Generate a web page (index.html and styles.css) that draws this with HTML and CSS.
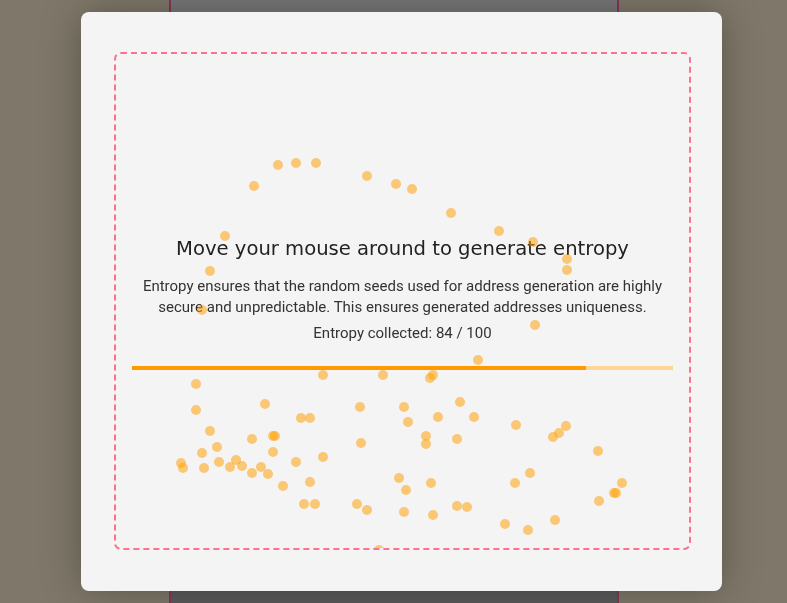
FILE: index.html
```html
<!DOCTYPE html>
<html>
<head>
<meta charset="utf-8">
<link rel="stylesheet" href="styles.css">
</head>
<body>
<div class="page"><div class="column"></div></div>
<div class="overlay">
  <div class="modal">
    <div class="dropzone">
      <div class="content">
        <h2 class="title">Move your mouse around to generate entropy</h2>
        <p class="desc">Entropy ensures that the random seeds used for address generation are highly secure and unpredictable. This ensures generated addresses uniqueness.</p>
        <p class="count">Entropy collected: 84 / 100</p>
        <div class="bar"><div class="fill" style="width:84%"></div></div>
      </div>
      <div class="dots">
        <span class="dot" style="left:139px;top:132px"></span>
        <span class="dot" style="left:163px;top:111px"></span>
        <span class="dot" style="left:181px;top:109px"></span>
        <span class="dot" style="left:201px;top:109px"></span>
        <span class="dot" style="left:252px;top:122px"></span>
        <span class="dot" style="left:281px;top:130px"></span>
        <span class="dot" style="left:297px;top:135px"></span>
        <span class="dot" style="left:336px;top:159px"></span>
        <span class="dot" style="left:110px;top:182px"></span>
        <span class="dot" style="left:95px;top:217px"></span>
        <span class="dot" style="left:87px;top:256px"></span>
        <span class="dot" style="left:384px;top:177px"></span>
        <span class="dot" style="left:418px;top:188px"></span>
        <span class="dot" style="left:452px;top:205px"></span>
        <span class="dot" style="left:452px;top:216px"></span>
        <span class="dot" style="left:420px;top:271px"></span>
        <span class="dot" style="left:363px;top:306px"></span>
        <span class="dot" style="left:208px;top:321px"></span>
        <span class="dot" style="left:268px;top:321px"></span>
        <span class="dot" style="left:81px;top:330px"></span>
        <span class="dot" style="left:81px;top:356px"></span>
        <span class="dot" style="left:150px;top:350px"></span>
        <span class="dot" style="left:245px;top:353px"></span>
        <span class="dot" style="left:289px;top:353px"></span>
        <span class="dot" style="left:186px;top:364px"></span>
        <span class="dot" style="left:195px;top:364px"></span>
        <span class="dot" style="left:293px;top:368px"></span>
        <span class="dot" style="left:95px;top:377px"></span>
        <span class="dot" style="left:137px;top:385px"></span>
        <span class="dot" style="left:158px;top:382px"></span>
        <span class="dot" style="left:160px;top:382px"></span>
        <span class="dot" style="left:246px;top:389px"></span>
        <span class="dot" style="left:102px;top:393px"></span>
        <span class="dot" style="left:87px;top:399px"></span>
        <span class="dot" style="left:158px;top:398px"></span>
        <span class="dot" style="left:208px;top:403px"></span>
        <span class="dot" style="left:66px;top:409px"></span>
        <span class="dot" style="left:68px;top:414px"></span>
        <span class="dot" style="left:89px;top:414px"></span>
        <span class="dot" style="left:104px;top:408px"></span>
        <span class="dot" style="left:115px;top:413px"></span>
        <span class="dot" style="left:121px;top:406px"></span>
        <span class="dot" style="left:127px;top:412px"></span>
        <span class="dot" style="left:137px;top:419px"></span>
        <span class="dot" style="left:146px;top:413px"></span>
        <span class="dot" style="left:153px;top:420px"></span>
        <span class="dot" style="left:181px;top:408px"></span>
        <span class="dot" style="left:168px;top:432px"></span>
        <span class="dot" style="left:195px;top:428px"></span>
        <span class="dot" style="left:284px;top:424px"></span>
        <span class="dot" style="left:291px;top:436px"></span>
        <span class="dot" style="left:189px;top:450px"></span>
        <span class="dot" style="left:200px;top:450px"></span>
        <span class="dot" style="left:242px;top:450px"></span>
        <span class="dot" style="left:252px;top:456px"></span>
        <span class="dot" style="left:289px;top:458px"></span>
        <span class="dot" style="left:264px;top:496px"></span>
        <span class="dot" style="left:315px;top:324px"></span>
        <span class="dot" style="left:318px;top:321px"></span>
        <span class="dot" style="left:345px;top:348px"></span>
        <span class="dot" style="left:323px;top:363px"></span>
        <span class="dot" style="left:359px;top:363px"></span>
        <span class="dot" style="left:401px;top:371px"></span>
        <span class="dot" style="left:451px;top:372px"></span>
        <span class="dot" style="left:444px;top:379px"></span>
        <span class="dot" style="left:438px;top:383px"></span>
        <span class="dot" style="left:311px;top:382px"></span>
        <span class="dot" style="left:311px;top:390px"></span>
        <span class="dot" style="left:342px;top:385px"></span>
        <span class="dot" style="left:483px;top:397px"></span>
        <span class="dot" style="left:415px;top:419px"></span>
        <span class="dot" style="left:400px;top:429px"></span>
        <span class="dot" style="left:316px;top:429px"></span>
        <span class="dot" style="left:507px;top:429px"></span>
        <span class="dot" style="left:501px;top:439px"></span>
        <span class="dot" style="left:499px;top:439px"></span>
        <span class="dot" style="left:484px;top:447px"></span>
        <span class="dot" style="left:318px;top:461px"></span>
        <span class="dot" style="left:342px;top:452px"></span>
        <span class="dot" style="left:352px;top:453px"></span>
        <span class="dot" style="left:390px;top:470px"></span>
        <span class="dot" style="left:413px;top:476px"></span>
        <span class="dot" style="left:440px;top:466px"></span>
      </div>
    </div>
  </div>
</div>
</body>
</html>
```

FILE: styles.css
```css
* { box-sizing: border-box; }
html, body { margin: 0; height: 100%; }
body {
  background: #7f786a;
  font-family: Roboto, "Liberation Sans", sans-serif;
  overflow: hidden;
}
.page {
  height: 100%;
  display: flex;
  justify-content: center;
  padding-left: 1px;
}
.column {
  width: 450px;
  height: 100%;
  background: linear-gradient(#787878, #5b5b5b);
  border-left: 2px solid #8a3656;
  border-right: 2px solid #8a3656;
}
.overlay {
  position: fixed;
  inset: 0;
  display: flex;
  align-items: center;
  justify-content: center;
  padding-left: 16px;
}
.modal {
  width: 641px;
  height: 579px;
  background: #f4f4f4;
  border-radius: 8px;
  padding: 40px 31px 41px 33px;
  box-shadow: 0 0 40px rgba(0, 0, 0, 0.3);
}
.dropzone {
  position: relative;
  height: 100%;
  border: 2px dashed #ff6f8f;
  border-radius: 7px;
  overflow: hidden;
  display: flex;
  align-items: center;
}
.content {
  width: 100%;
  padding: 5px 16px 0;
  text-align: center;
  color: #333;
}
.title {
  margin: 0 0 16px;
  font-family: "DejaVu Sans", sans-serif;
  font-weight: 400;
  font-size: 19.6px;
  color: #222;
}
.desc {
  margin: 0 0 5px;
  font-size: 15px;
  line-height: 21px;
}
.count {
  margin: 0 0 22px;
  font-size: 15px;
  line-height: 21px;
}
.bar {
  height: 4px;
  background: #ffd699;
}
.fill {
  height: 100%;
  background: #ff9900;
}
.dots {
  position: absolute;
  inset: 0;
  pointer-events: none;
}
.dot {
  position: absolute;
  width: 10px;
  height: 10px;
  margin: -5px 0 0 -6px;
  border-radius: 50%;
  background: rgba(255, 160, 0, 0.52);
}
```
